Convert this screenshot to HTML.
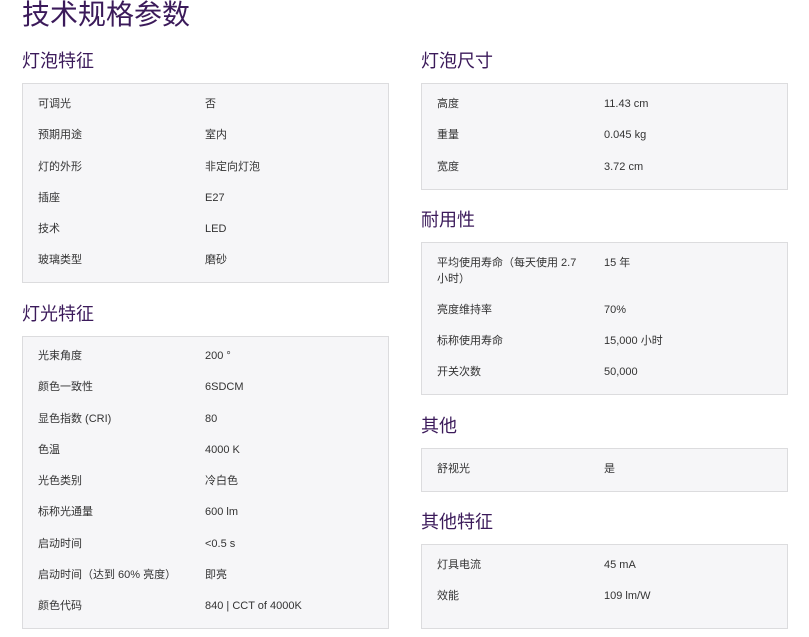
<!DOCTYPE html>
<html><head><meta charset="utf-8"><style>
*{margin:0;padding:0;box-sizing:border-box}
body{width:809px;height:637px;background:#fff;position:relative;overflow:hidden;font-family:"Liberation Sans","Noto Sans CJK SC",sans-serif;color:#333}
.t{position:absolute;left:22px;top:-2px;font-size:28px;color:#3b1a5a;line-height:34px}
.h{position:absolute;font-size:18px;color:#3b1a5a;line-height:22px}
.b{position:absolute;background:#f6f6f8;border:1px solid #dcdcde;width:367px}
.r{position:absolute;font-size:11px;line-height:16px;color:#333}
.l{width:150px}
</style></head><body>
<div class="t">技术规格参数</div>

<div class="h" style="left:22px;top:50px">灯泡特征</div>
<div class="b" style="left:22px;top:83px;height:200px"></div>
<div class="h" style="left:22px;top:303px">灯光特征</div>
<div class="b" style="left:22px;top:336px;height:293px"></div>

<div class="h" style="left:421px;top:50px">灯泡尺寸</div>
<div class="b" style="left:421px;top:83px;height:107px"></div>
<div class="h" style="left:421px;top:209px">耐用性</div>
<div class="b" style="left:421px;top:242px;height:153px"></div>
<div class="h" style="left:421px;top:415px">其他</div>
<div class="b" style="left:421px;top:448px;height:44px"></div>
<div class="h" style="left:421px;top:511px">其他特征</div>
<div class="b" style="left:421px;top:544px;height:85px"></div>

<!-- left rows -->
<div class="r l" style="left:38px;top:96px">可调光</div><div class="r" style="left:205px;top:96px">否</div>
<div class="r l" style="left:38px;top:127px">预期用途</div><div class="r" style="left:205px;top:127px">室内</div>
<div class="r l" style="left:38px;top:159px">灯的外形</div><div class="r" style="left:205px;top:159px">非定向灯泡</div>
<div class="r l" style="left:38px;top:190px">插座</div><div class="r" style="left:205px;top:190px">E27</div>
<div class="r l" style="left:38px;top:221px">技术</div><div class="r" style="left:205px;top:221px">LED</div>
<div class="r l" style="left:38px;top:252px">玻璃类型</div><div class="r" style="left:205px;top:252px">磨砂</div>

<div class="r l" style="left:38px;top:348px">光束角度</div><div class="r" style="left:205px;top:348px">200 °</div>
<div class="r l" style="left:38px;top:379px">颜色一致性</div><div class="r" style="left:205px;top:379px">6SDCM</div>
<div class="r l" style="left:38px;top:411px">显色指数 (CRI)</div><div class="r" style="left:205px;top:411px">80</div>
<div class="r l" style="left:38px;top:442px">色温</div><div class="r" style="left:205px;top:442px">4000 K</div>
<div class="r l" style="left:38px;top:473px">光色类别</div><div class="r" style="left:205px;top:473px">冷白色</div>
<div class="r l" style="left:38px;top:504px">标称光通量</div><div class="r" style="left:205px;top:504px">600 lm</div>
<div class="r l" style="left:38px;top:536px">启动时间</div><div class="r" style="left:205px;top:536px">&lt;0.5 s</div>
<div class="r" style="left:38px;top:567px;width:160px">启动时间（达到 60% 亮度）</div><div class="r" style="left:205px;top:567px">即亮</div>
<div class="r l" style="left:38px;top:598px">颜色代码</div><div class="r" style="left:205px;top:598px">840 | CCT of 4000K</div>

<!-- right rows -->
<div class="r l" style="left:437px;top:96px">高度</div><div class="r" style="left:604px;top:96px">11.43 cm</div>
<div class="r l" style="left:437px;top:127px">重量</div><div class="r" style="left:604px;top:127px">0.045 kg</div>
<div class="r l" style="left:437px;top:159px">宽度</div><div class="r" style="left:604px;top:159px">3.72 cm</div>

<div class="r" style="left:437px;top:255px;width:150px">平均使用寿命（每天使用 2.7 小时）</div><div class="r" style="left:604px;top:255px">15 年</div>
<div class="r l" style="left:437px;top:302px">亮度维持率</div><div class="r" style="left:604px;top:302px">70%</div>
<div class="r l" style="left:437px;top:333px">标称使用寿命</div><div class="r" style="left:604px;top:333px">15,000 小时</div>
<div class="r l" style="left:437px;top:364px">开关次数</div><div class="r" style="left:604px;top:364px">50,000</div>

<div class="r l" style="left:437px;top:461px">舒视光</div><div class="r" style="left:604px;top:461px">是</div>

<div class="r l" style="left:437px;top:557px">灯具电流</div><div class="r" style="left:604px;top:557px">45 mA</div>
<div class="r l" style="left:437px;top:588px">效能</div><div class="r" style="left:604px;top:588px">109 lm/W</div>
</body></html>
